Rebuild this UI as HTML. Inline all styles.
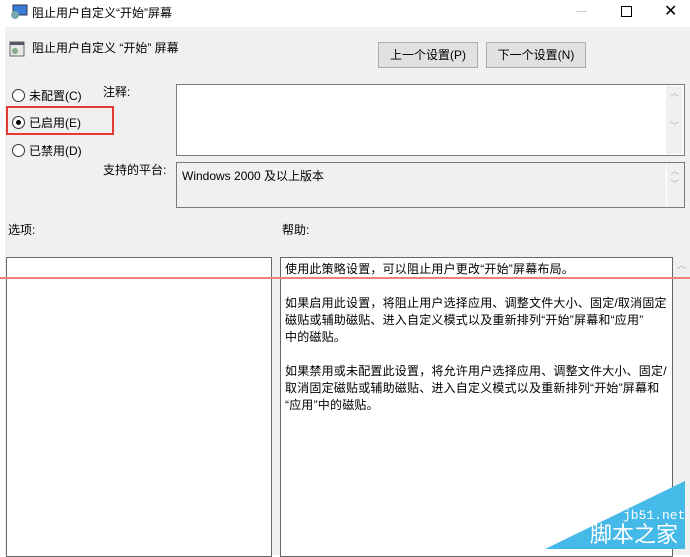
<!DOCTYPE html>
<html><head><meta charset="utf-8"><style>
*{margin:0;padding:0;box-sizing:border-box}
body{width:690px;height:555px;overflow:hidden;background:#fff;font-family:"Liberation Sans","Microsoft YaHei","Noto Sans CJK SC",sans-serif;font-size:12px;color:#000;position:relative}
.a{position:absolute}
.g{position:absolute;left:5px;top:27px;right:0;bottom:0;background:#f0f0f0}
.btn{position:absolute;height:26px;background:#e1e1e1;border:1px solid #adadad;text-align:center;line-height:24px;font-size:12px}
.box{position:absolute;border:1px solid #7a7a7a}
.radio{position:absolute;width:13px;height:13px;border:1px solid #333;border-radius:50%;background:#fff}
.sb{position:absolute;right:1px;top:1px;bottom:1px;width:17px;background:#f0f0f0;color:#b0b0b0;font-size:9px;text-align:center}
.h{white-space:nowrap}
</style></head><body>
<div class="g"></div>
<svg class="a" style="left:10px;top:4px" width="18" height="16"><rect x="3" y="1" width="14" height="10" fill="#3a7bd5" stroke="#335"/><circle cx="5" cy="11" r="4" fill="#7aa"/></svg>
<div class="a" style="left:32px;top:4px;font-size:12px">阻止用户自定义“开始”屏幕</div>
<div class="a" style="left:576px;top:11px;width:11px;height:1px;background:#ccc"></div>
<div class="a" style="left:621px;top:6px;width:11px;height:11px;border:1px solid #000"></div>
<div class="a" style="left:664px;top:1px;font-size:16px">✕</div>
<svg class="a" style="left:9px;top:41px" width="16" height="16"><rect x="1" y="1" width="14" height="14" fill="#e8e8e8" stroke="#666"/><rect x="1" y="1" width="14" height="3" fill="#556"/><circle cx="6" cy="10" r="3" fill="#8a8"/></svg>
<div class="a" style="left:32px;top:39px;font-size:12px">阻止用户自定义 “开始” 屏幕</div>
<div class="btn" style="left:378px;top:42px;width:100px">上一个设置(P)</div>
<div class="btn" style="left:486px;top:42px;width:100px">下一个设置(N)</div>
<div class="radio" style="left:12px;top:89px"></div><div class="a" style="left:29px;top:87px">未配置(C)</div>
<div class="radio" style="left:12px;top:116px"></div><div class="a" style="left:16px;top:120px;width:5px;height:5px;border-radius:50%;background:#000"></div><div class="a" style="left:29px;top:114px">已启用(E)</div>
<div class="radio" style="left:12px;top:144px"></div><div class="a" style="left:29px;top:142px">已禁用(D)</div>
<div class="a" style="left:6px;top:106px;width:108px;height:29px;border:2px solid #e53935"></div>
<div class="a" style="left:103px;top:83px">注释:</div>
<div class="a" style="left:103px;top:161px">支持的平台:</div>
<div class="box" style="left:176px;top:84px;width:509px;height:72px;background:#fff"><div class="sb">︿<br><br><br>﹀</div></div>
<div class="box" style="left:176px;top:162px;width:509px;height:46px;background:#f0f0f0"><div class="a" style="left:5px;top:4px">Windows 2000 及以上版本</div><div class="sb" style="border-left:1px solid #fff">︿<br>﹀</div></div>
<div class="a" style="left:8px;top:221px">选项:</div>
<div class="a" style="left:282px;top:221px">帮助:</div>
<div class="box" style="left:6px;top:257px;width:266px;height:300px;background:#fff;border-color:#666"></div>
<div class="box" style="left:280px;top:257px;width:393px;height:300px;background:#fff;border-color:#666;padding:3px 4px;line-height:17px;font-size:12px;letter-spacing:0.2px">
<div class="h">使用此策略设置，可以阻止用户更改“开始”屏幕布局。</div><br>
<div class="h">如果启用此设置，将阻止用户选择应用、调整文件大小、固定/取消固定<br>磁贴或辅助磁贴、进入自定义模式以及重新排列“开始”屏幕和“应用”<br>中的磁贴。</div><br>
<div class="h">如果禁用或未配置此设置，将允许用户选择应用、调整文件大小、固定/<br>取消固定磁贴或辅助磁贴、进入自定义模式以及重新排列“开始”屏幕和<br>“应用”中的磁贴。</div>
</div>
<div class="a" style="left:677px;top:258px;color:#aaa;font-size:9px">︿</div>
<div class="a" style="left:0;top:277px;width:690px;height:2px;background:#f08080"></div>
<svg class="a" style="left:545px;top:480px" width="145" height="70"><polygon points="0,69 140,1 140,69" fill="#45b9e8"/></svg>
<div class="a" style="left:623px;top:508px;color:#fff;font-family:'Liberation Mono',monospace;font-size:13px">jb51.net</div>
<div class="a" style="left:590px;top:522px;color:#fff;font-size:22px;line-height:26px">脚本之家</div>
</body></html>
